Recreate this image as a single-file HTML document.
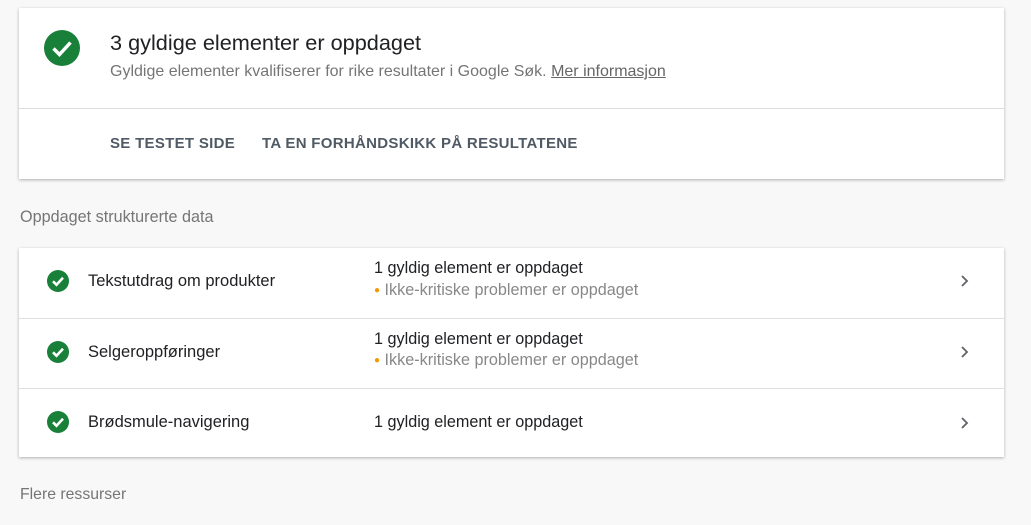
<!DOCTYPE html>
<html><head><meta charset="utf-8"><style>
body{margin:0;background:#f8f8f8;font-family:"Liberation Sans",sans-serif;width:1031px;height:525px;overflow:hidden;position:relative}
.card{position:absolute;left:19px;width:985px;background:#fff;box-shadow:0 1px 3px rgba(0,0,0,.3)}
.abs{position:absolute;white-space:nowrap}
.row{position:absolute;left:0;width:985px;height:70px}
.row+.row{border-top:1px solid #e0e0e0}
</style></head><body>
<div class="card" style="top:8px;height:171px">
 <svg class="abs" style="left:24px;top:21px" width="38" height="38" viewBox="0 0 38 38"><circle cx="19" cy="19" r="18" fill="#188038"/><path d="M10.5 19.5l6 6 11-12" stroke="#fff" stroke-width="3.5" fill="none"/></svg>
 <div class="abs" style="left:91px;top:22px;font-size:21.7px;color:#202124">3 gyldige elementer er oppdaget</div>
 <div class="abs" style="left:91px;top:55px;font-size:16px;color:#757575">Gyldige elementer kvalifiserer for rike resultater i Google Søk. <span style="text-decoration:underline;color:#666">Mer informasjon</span></div>
 <div class="abs" style="left:0;top:100px;width:985px;border-top:1px solid #ddd"></div>
 <div class="abs" style="left:91px;top:127px;font-size:15px;font-weight:bold;color:#505a64;letter-spacing:.3px">SE TESTET SIDE</div>
 <div class="abs" style="left:243px;top:127px;font-size:15px;font-weight:bold;color:#505a64;letter-spacing:.3px">TA EN FORHÅNDSKIKK PÅ RESULTATENE</div>
</div>
<div class="abs" style="left:20px;top:208px;font-size:16.2px;color:#757575">Oppdaget strukturerte data</div>
<div class="card" style="top:248px;height:209px">
 <div class="row" style="top:0">
  <svg class="abs" style="left:28px;top:22px" width="22" height="22" viewBox="0 0 22 22"><circle cx="11" cy="11" r="11" fill="#188038"/><path d="M6 11.3l3.5 3.5 6.5-7" stroke="#fff" stroke-width="2.6" fill="none"/></svg>
  <div class="abs" style="left:69px;top:24px;font-size:16.5px;color:#202124">Tekstutdrag om produkter</div>
  <div class="abs" style="left:355px;top:11px;font-size:16.2px;color:#202124">1 gyldig element er oppdaget</div>
  <div class="abs" style="left:355px;top:33px;font-size:16.2px;color:#888"><span style="color:#f29900;font-size:10px;vertical-align:2px">●</span> Ikke-kritiske problemer er oppdaget</div>
  <svg class="abs" style="left:940px;top:26px" width="12" height="14"><path d="M3 2l5 5-5 5" stroke="#5f6368" stroke-width="1.8" fill="none"/></svg>
 </div>
 <div class="row" style="top:70px">
  <svg class="abs" style="left:28px;top:22px" width="22" height="22" viewBox="0 0 22 22"><circle cx="11" cy="11" r="11" fill="#188038"/><path d="M6 11.3l3.5 3.5 6.5-7" stroke="#fff" stroke-width="2.6" fill="none"/></svg>
  <div class="abs" style="left:69px;top:24px;font-size:16.5px;color:#202124">Selgeroppføringer</div>
  <div class="abs" style="left:355px;top:11px;font-size:16.2px;color:#202124">1 gyldig element er oppdaget</div>
  <div class="abs" style="left:355px;top:32px;font-size:16.2px;color:#888"><span style="color:#f29900;font-size:10px;vertical-align:2px">●</span> Ikke-kritiske problemer er oppdaget</div>
  <svg class="abs" style="left:940px;top:26px" width="12" height="14"><path d="M3 2l5 5-5 5" stroke="#5f6368" stroke-width="1.8" fill="none"/></svg>
 </div>
 <div class="row" style="top:140px">
  <svg class="abs" style="left:28px;top:22px" width="22" height="22" viewBox="0 0 22 22"><circle cx="11" cy="11" r="11" fill="#188038"/><path d="M6 11.3l3.5 3.5 6.5-7" stroke="#fff" stroke-width="2.6" fill="none"/></svg>
  <div class="abs" style="left:69px;top:24px;font-size:16.5px;color:#202124">Brødsmule-navigering</div>
  <div class="abs" style="left:355px;top:24px;font-size:16.2px;color:#202124">1 gyldig element er oppdaget</div>
  <svg class="abs" style="left:940px;top:27px" width="12" height="14"><path d="M3 2l5 5-5 5" stroke="#5f6368" stroke-width="1.8" fill="none"/></svg>
 </div>
</div>
<div class="abs" style="left:20px;top:486px;font-size:15.8px;color:#757575">Flere ressurser</div>
</body></html>
